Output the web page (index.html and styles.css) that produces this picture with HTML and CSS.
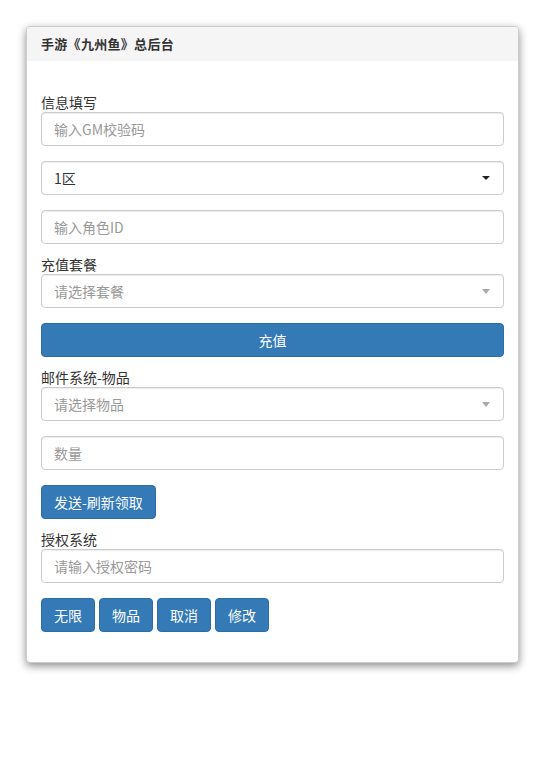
FILE: index.html
```html
<!DOCTYPE html>
<html>
<head>
<meta charset="utf-8">
<link rel="stylesheet" href="styles.css">
</head>
<body>
<div class="panel">
  <div class="panel-heading">手游《九州鱼》总后台</div>
  <div class="panel-body">
    <div class="label">信息填写</div>
    <div class="control group"><span class="ph">输入GM校验码</span></div>
    <div class="control select group"><span class="val">1区</span><span class="caret dark"></span></div>
    <div class="control group tight"><span class="ph">输入角色ID</span></div>
    <div class="label">充值套餐</div>
    <div class="control select group"><span class="ph">请选择套餐</span><span class="caret"></span></div>
    <div class="btn block group tight">充值</div>
    <div class="label">邮件系统-物品</div>
    <div class="control select group"><span class="ph">请选择物品</span><span class="caret"></span></div>
    <div class="control group"><span class="ph">数量</span></div>
    <div class="group tight"><span class="btn">发送-刷新领取</span></div>
    <div class="label">授权系统</div>
    <div class="control group"><span class="ph">请输入授权密码</span></div>
    <div class="btn-row"><span class="btn">无限</span><span class="btn">物品</span><span class="btn">取消</span><span class="btn">修改</span></div>
  </div>
</div>
</body>
</html>
```
FILE: styles.css
```css
* { box-sizing: border-box; }
body {
  margin: 0;
  padding: 26px 26px;
  background: #fff;
  font-family: "Microsoft YaHei", "Noto Sans CJK SC", "Liberation Sans", sans-serif;
  font-size: 14px;
  line-height: 20px;
  color: #333;
}
.panel {
  border: 1px solid #ccc;
  border-radius: 4px;
  background: #fff;
  box-shadow: 0 3px 9px rgba(0,0,0,0.45);
}
.panel-heading {
  background: #f5f5f5;
  padding: 7px 14px;
  font-weight: bold;
  font-size: 13px;
  line-height: 20px;
  border-radius: 3px 3px 0 0;
  letter-spacing: 0.3px;
}
.panel-body {
  padding: 31px 14px 15px;
}
.label {
  line-height: 20px;
}
.control {
  height: 34px;
  border: 1px solid #ccc;
  border-radius: 4px;
  padding: 6px 12px;
  display: flex;
  align-items: center;
  justify-content: space-between;
  box-shadow: inset 0 1px 1px rgba(0,0,0,0.075);
}
.group { margin-bottom: 15px; }
.group.tight { margin-bottom: 10px; }
.ph { color: #999; }
.val { color: #333; }
.caret {
  width: 0; height: 0;
  border-left: 4px solid transparent;
  border-right: 4px solid transparent;
  border-top: 5px solid #aaa;
  margin-right: 1px;
}
.caret.dark { border-top-color: #222; border-top-width: 4px; }
.btn {
  display: inline-block;
  height: 34px;
  line-height: 20px;
  padding: 6px 12px;
  background: #337ab7;
  border: 1px solid #2e6da4;
  border-radius: 4px;
  color: #fff;
  text-align: center;
}
.btn.block { display: block; }
.btn-row { display: flex; gap: 4px; margin-bottom: 15px; }
```
